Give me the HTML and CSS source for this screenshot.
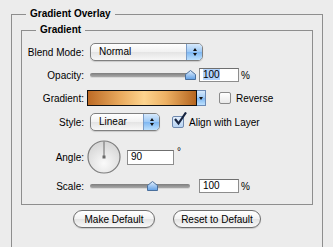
FILE: index.html
```html
<!DOCTYPE html>
<html lang="en">
<head>
  <meta charset="UTF-8" />
  <title>Gradient Overlay</title>
  <link rel="stylesheet" href="styles.css">
</head>
<body>
  <fieldset class="outer">
    <legend>Gradient Overlay</legend>

    <fieldset class="inner">
      <legend>Gradient</legend>

      <div class="row row-blend">
        <span class="label">Blend Mode:</span>
        <div class="popup popup-wide">
          <span class="popup-text">Normal</span>
          <span class="popup-btn"><i class="up"></i><i class="down"></i></span>
        </div>
      </div>

      <div class="row row-opacity">
        <span class="label">Opacity:</span>
        <div class="slider">
          <div class="track"></div>
          <svg class="thumb" style="left: 95px" width="11" height="10" viewBox="0 0 11 10">
            <defs>
              <linearGradient id="tg1" x1="0" y1="0" x2="0" y2="1">
                <stop offset="0" stop-color="#e4f0fd"/>
                <stop offset="1" stop-color="#5f9fe6"/>
              </linearGradient>
            </defs>
            <path d="M5.5 0.5 L10.5 4.5 L10.5 9.5 L0.5 9.5 L0.5 4.5 Z" fill="url(#tg1)" stroke="#4a6f9c"/>
          </svg>
        </div>
        <div class="field field-num"><span class="sel">100</span></div>
        <span class="unit">%</span>
      </div>

      <div class="row row-gradient">
        <span class="label">Gradient:</span>
        <div class="grad">
          <div class="grad-bar"></div>
          <div class="grad-btn"><i class="down"></i></div>
        </div>
        <span class="check"></span>
        <span class="check-text">Reverse</span>
      </div>

      <div class="row row-style">
        <span class="label">Style:</span>
        <div class="popup popup-narrow">
          <span class="popup-text">Linear</span>
          <span class="popup-btn"><i class="up"></i><i class="down"></i></span>
        </div>
        <span class="check check-on">
          <svg width="16" height="16" viewBox="0 0 16 16">
            <path d="M3 7 L6.5 11.5 L14 0.5" fill="none" stroke="#16233f" stroke-width="2.2"/>
          </svg>
        </span>
        <span class="check-text">Align with Layer</span>
      </div>

      <div class="row row-angle">
        <span class="label">Angle:</span>
        <svg class="dial" width="34" height="34" viewBox="0 0 34 34">
          <defs>
            <radialGradient id="dg" cx="0.5" cy="0.7" r="0.7">
              <stop offset="0" stop-color="#fafafa"/>
              <stop offset="1" stop-color="#d4d4d4"/>
            </radialGradient>
          </defs>
          <circle cx="17" cy="17" r="16" fill="url(#dg)" stroke="#7d7d7d" stroke-width="1.2"/>
          <line x1="17" y1="17" x2="17" y2="1.5" stroke="#6a6a6a" stroke-width="1"/>
          <rect x="15.5" y="15.5" width="3" height="3" fill="#6a6a6a"/>
        </svg>
        <div class="field field-angle">90</div>
        <span class="unit deg">°</span>
      </div>

      <div class="row row-scale">
        <span class="label">Scale:</span>
        <div class="slider">
          <div class="track"></div>
          <svg class="thumb" style="left: 57px" width="11" height="10" viewBox="0 0 11 10">
            <defs>
              <linearGradient id="tg2" x1="0" y1="0" x2="0" y2="1">
                <stop offset="0" stop-color="#e4f0fd"/>
                <stop offset="1" stop-color="#5f9fe6"/>
              </linearGradient>
            </defs>
            <path d="M5.5 0.5 L10.5 4.5 L10.5 9.5 L0.5 9.5 L0.5 4.5 Z" fill="url(#tg2)" stroke="#4a6f9c"/>
          </svg>
        </div>
        <div class="field field-num">100</div>
        <span class="unit">%</span>
      </div>
    </fieldset>

    <div class="buttons">
      <button class="btn btn-make">Make Default</button>
      <button class="btn btn-reset">Reset to Default</button>
    </div>
  </fieldset>
</body>
</html>
```

FILE: styles.css
```css
html, body {
  margin: 0;
  background: #ececec;
  overflow: hidden;
}

body {
  padding: 7px 10px 0 11px;
  font-family: "Liberation Sans", Arial, sans-serif;
  font-size: 10px;
  color: #000;
}

fieldset {
  margin: 0;
  border: 1px solid #8e8e8e;
}

legend {
  font-weight: bold;
  line-height: 14px;
  padding: 0 4px;
}

.outer {
  padding: 2px 9px 80px 9px;
}

.outer > legend {
  margin-left: 5px;
}

.inner {
  padding: 0 0 11px 0;
}

.inner > legend {
  margin-left: 14px;
}

.row {
  display: flex;
  align-items: center;
}

.label {
  width: 62px;
  margin-right: 6px;
  text-align: right;
  flex-shrink: 0;
}

.row-blend { margin-top: 6px; height: 18px; }
.row-opacity { margin-top: 7px; height: 14px; }
.row-gradient { margin-top: 8px; height: 16px; }
.row-style { margin-top: 7px; height: 18px; }
.row-angle { margin-top: 9px; height: 34px; }
.row-scale { margin-top: 5px; height: 14px; }

/* pop-up menus */
.popup {
  box-sizing: border-box;
  height: 18px;
  display: flex;
  border: 1px solid #7f7f7f;
  border-radius: 5px;
  background: linear-gradient(#ffffff, #f1f1f1 50%, #e4e4e4 51%, #f7f7f7);
  overflow: hidden;
  box-shadow: 0 1px 1px rgba(0,0,0,0.15);
}

.popup-wide { width: 113px; }
.popup-narrow { width: 70px; }

.popup-text {
  flex: 1;
  padding-left: 8px;
  line-height: 16px;
}

.popup-btn {
  width: 15px;
  border-left: 1px solid #7a9bc6;
  background: linear-gradient(#d6e9fc, #9cc8f5 50%, #7db6f1 51%, #bde0fd);
  display: flex;
  flex-direction: column;
  align-items: center;
  justify-content: center;
  gap: 2px;
}

.up, .down {
  width: 0;
  height: 0;
  border-left: 2.5px solid transparent;
  border-right: 2.5px solid transparent;
}

.up { border-bottom: 3px solid #111; }
.down { border-top: 3px solid #111; }

/* sliders */
.slider {
  position: relative;
  width: 104px;
  height: 14px;
}

.track {
  position: absolute;
  left: 0;
  top: 5px;
  width: 100px;
  height: 4px;
  border-radius: 2px;
  background: linear-gradient(#7d7d7d, #a9a9a9);
  box-shadow: 0 1px 0 #d8d8d8;
}

.thumb {
  position: absolute;
  top: 2px;
}

/* number fields */
.field {
  box-sizing: border-box;
  height: 14px;
  background: #fff;
  border: 1px solid #8d8d8d;
  border-top-color: #6f6f6f;
  line-height: 12px;
  padding-left: 3px;
}

.field-num {
  width: 40px;
  margin-left: 5px;
}

.field-angle {
  width: 47px;
  height: 15px;
  margin-left: 6px;
}

.sel {
  background: #b4d4fc;
}

.unit {
  margin-left: 2px;
}

.deg {
  margin-left: 3px;
  align-self: flex-start;
  margin-top: 6px;
}

/* gradient swatch */
.grad {
  display: flex;
  margin-left: -3px;
  height: 16px;
}

.grad-bar {
  box-sizing: border-box;
  width: 110px;
  border: 1px solid #111;
  background: linear-gradient(to right, #bd6b25, #e9aa5e 30%, #fdd48e 52%, #edb164 72%, #b5651f);
}

.grad-btn {
  box-sizing: border-box;
  width: 9px;
  border: 1px solid #6b8ab5;
  border-left: none;
  background: linear-gradient(#d6e9fc, #9cc8f5 50%, #7db6f1 51%, #bde0fd);
  display: flex;
  align-items: center;
  justify-content: center;
}

/* checkboxes */
.check {
  box-sizing: border-box;
  width: 12px;
  height: 12px;
  border: 1px solid #8a8a8a;
  border-radius: 2px;
  background: linear-gradient(#ffffff, #e9e9e9);
  position: relative;
}

.row-gradient .check { margin-left: 13px; }
.row-style .check { margin-left: 12px; }

.check-on {
  background: linear-gradient(#e3eefb, #b7d3f3);
  border-color: #6d87ad;
}

.check-on svg {
  position: absolute;
  left: -1px;
  top: -5px;
}

.check-text {
  margin-left: 5px;
}

.dial {
  margin-left: -3px;
}

/* buttons */
.buttons {
  display: flex;
  justify-content: center;
  gap: 18px;
  margin-top: 5px;
}

.btn {
  box-sizing: border-box;
  height: 18px;
  padding: 0;
  font-family: inherit;
  font-size: 10px;
  color: #000;
  border: 1px solid #6e6e6e;
  border-radius: 9px;
  background: linear-gradient(#ffffff, #f2f2f2 50%, #e3e3e3 51%, #f8f8f8);
  box-shadow: 0 1px 1px rgba(0,0,0,0.15);
}

.btn-make { width: 82px; }
.btn-reset { width: 88px; }
```
